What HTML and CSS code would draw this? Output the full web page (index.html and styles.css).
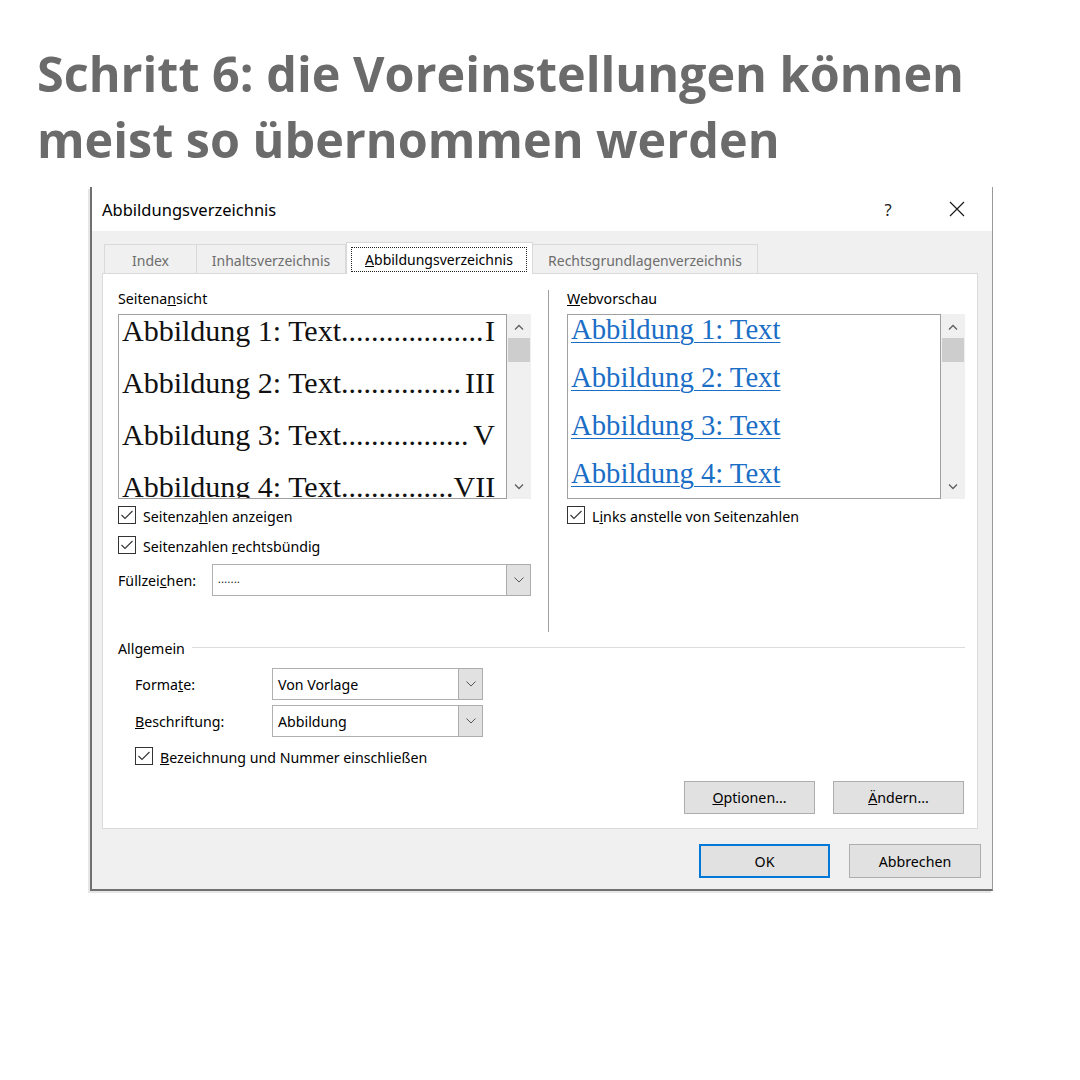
FILE: index.html
```html
<!DOCTYPE html>
<html lang="de">
<head>
<meta charset="utf-8">
<title>Abbildungsverzeichnis</title>
<link rel="stylesheet" href="styles.css">
</head>
<body>
<h1 class="heading">Schritt 6: die Voreinstellungen können<br>meist so übernommen werden</h1>

<div class="dialog">
  <div class="titlebar">
    <span class="title">Abbildungsverzeichnis</span>
    <span class="help">?</span>
    <span class="close"><svg width="16" height="16" viewBox="0 0 16 16"><path d="M1 1L15 15M15 1L1 15" stroke="#1a1a1a" stroke-width="1.2" fill="none"/></svg></span>
  </div>

  <div class="body">
    <div class="tabs">
      <div class="tab tab-index">Index</div>
      <div class="tab tab-inhalt">Inhaltsverzeichnis</div>
      <div class="tab tab-abb active"><span class="focus"><u>A</u>bbildungsverzeichnis</span></div>
      <div class="tab tab-recht">Rechtsgrundlagenverzeichnis</div>
    </div>

    <div class="panel">
      <div class="top">
        <div class="col col-left">
          <div class="label">Seitena<u>n</u>sicht</div>
          <div class="preview">
            <div class="pbox pbox-left">
              <div class="entries">
                <div class="entry"><span class="etext">Abbildung 1: Text...................</span><span class="pg">I</span></div>
                <div class="entry"><span class="etext">Abbildung 2: Text................</span><span class="pg">III</span></div>
                <div class="entry"><span class="etext">Abbildung 3: Text.................</span><span class="pg">V</span></div>
                <div class="entry"><span class="etext">Abbildung 4: Text...............</span><span class="pg">VII</span></div>
              </div>
            </div>
            <div class="scroll">
              <svg class="arrow" width="10" height="6" viewBox="0 0 10 6"><path d="M1 5.5L5 1.5L9 5.5" stroke="#606060" stroke-width="1.3" fill="none"/></svg>
              <div class="thumb"></div>
              <div class="spacer"></div>
              <svg class="arrow" width="10" height="6" viewBox="0 0 10 6"><path d="M1 0.5L5 4.5L9 0.5" stroke="#606060" stroke-width="1.3" fill="none"/></svg>
            </div>
          </div>
          <div class="check first">
            <svg class="cb" width="18" height="18" viewBox="0 0 18 18"><rect x="0.5" y="0.5" width="17" height="17" fill="#fff" stroke="#333"/><path d="M3.5 9L7 12.5L14.5 5" stroke="#333" stroke-width="1.1" fill="none"/></svg>
            <span>Seitenza<u>h</u>len anzeigen</span>
          </div>
          <div class="check">
            <svg class="cb" width="18" height="18" viewBox="0 0 18 18"><rect x="0.5" y="0.5" width="17" height="17" fill="#fff" stroke="#333"/><path d="M3.5 9L7 12.5L14.5 5" stroke="#333" stroke-width="1.1" fill="none"/></svg>
            <span>Seitenzahlen <u>r</u>echtsbündig</span>
          </div>
          <div class="field fill-row">
            <span class="flabel fill-label">Füllzei<u>c</u>hen:</span>
            <div class="combo fill-combo">
              <span class="cval dots">.......</span>
              <span class="cbtn"><svg width="10" height="6" viewBox="0 0 10 6"><path d="M0.5 0.5L5 5L9.5 0.5" stroke="#555" stroke-width="1" fill="none"/></svg></span>
            </div>
          </div>
        </div>

        <div class="sep"></div>

        <div class="col col-right">
          <div class="label"><u>W</u>ebvorschau</div>
          <div class="preview">
            <div class="pbox pbox-right">
              <div class="links">
                <a class="link">Abbildung 1: Text</a>
                <a class="link">Abbildung 2: Text</a>
                <a class="link">Abbildung 3: Text</a>
                <a class="link">Abbildung 4: Text</a>
              </div>
            </div>
            <div class="scroll">
              <svg class="arrow" width="10" height="6" viewBox="0 0 10 6"><path d="M1 5.5L5 1.5L9 5.5" stroke="#606060" stroke-width="1.3" fill="none"/></svg>
              <div class="thumb"></div>
              <div class="spacer"></div>
              <svg class="arrow" width="10" height="6" viewBox="0 0 10 6"><path d="M1 0.5L5 4.5L9 0.5" stroke="#606060" stroke-width="1.3" fill="none"/></svg>
            </div>
          </div>
          <div class="check first">
            <svg class="cb" width="18" height="18" viewBox="0 0 18 18"><rect x="0.5" y="0.5" width="17" height="17" fill="#fff" stroke="#333"/><path d="M3.5 9L7 12.5L14.5 5" stroke="#333" stroke-width="1.1" fill="none"/></svg>
            <span>L<u>i</u>nks anstelle von Seitenzahlen</span>
          </div>
        </div>
      </div>

      <div class="group">
        <div class="ghead"><span>Allgemein</span><span class="gline"></span></div>
        <div class="gbody">
          <div class="field first-field">
            <span class="flabel">Forma<u>t</u>e:</span>
            <div class="combo gcombo">
              <span class="cval">Von Vorlage</span>
              <span class="cbtn"><svg width="10" height="6" viewBox="0 0 10 6"><path d="M0.5 0.5L5 5L9.5 0.5" stroke="#555" stroke-width="1" fill="none"/></svg></span>
            </div>
          </div>
          <div class="field second-field">
            <span class="flabel"><u>B</u>eschriftung:</span>
            <div class="combo gcombo">
              <span class="cval">Abbildung</span>
              <span class="cbtn"><svg width="10" height="6" viewBox="0 0 10 6"><path d="M0.5 0.5L5 5L9.5 0.5" stroke="#555" stroke-width="1" fill="none"/></svg></span>
            </div>
          </div>
          <div class="check gcheck">
            <svg class="cb" width="18" height="18" viewBox="0 0 18 18"><rect x="0.5" y="0.5" width="17" height="17" fill="#fff" stroke="#333"/><path d="M3.5 9L7 12.5L14.5 5" stroke="#333" stroke-width="1.1" fill="none"/></svg>
            <span><u>B</u>ezeichnung und Nummer einschließen</span>
          </div>
        </div>
      </div>

      <div class="actions">
        <button class="btn"><u>O</u>ptionen...</button>
        <button class="btn"><u>Ä</u>ndern...</button>
      </div>
    </div>

    <div class="footer">
      <button class="btn btn-ok">OK</button>
      <button class="btn">Abbrechen</button>
    </div>
  </div>
</div>
</body>
</html>
```

FILE: styles.css
```css
* { box-sizing: border-box; }

html, body {
  margin: 0;
  padding: 0;
  background: #ffffff;
}

body {
  width: 1080px;
  height: 1080px;
  overflow: hidden;
  font-family: "Noto Sans", "Open Sans", sans-serif;
}

.heading {
  margin: 0;
  padding: 40px 0 0 37px;
  font-family: "Open Sans", sans-serif;
  font-weight: 700;
  font-size: 48.5px;
  line-height: 66px;
  color: #6b6b6b;
  letter-spacing: 0;
}

.dialog {
  margin: 15px 0 0 90px;
  width: 903px;
  height: 704px;
  border-left: 2px solid #707070;
  border-right: 1px solid #9a9a9a;
  border-bottom: 2px solid #707070;
  box-shadow: -2px 2px 0 #e6e6e6;
  display: flex;
  flex-direction: column;
  font-size: 14.2px;
  color: #000;
}

.titlebar {
  height: 44px;
  background: #fff;
  display: flex;
  align-items: center;
  padding-left: 10px;
}

.title {
  font-size: 16.5px;
  flex: 1;
  color: #000;
}

.help {
  font-size: 16.5px;
  width: 14px;
  text-align: center;
  margin-right: 54px;
  color: #1a1a1a;
}

.close {
  display: flex;
  width: 16px;
  height: 16px;
  margin-right: 27px;
}

.body {
  flex: 1;
  background: #f0f0f0;
  padding-top: 11px;
  display: flex;
  flex-direction: column;
}

.tabs {
  display: flex;
  align-items: flex-end;
  height: 31px;
  padding-left: 12px;
  font-size: 14px;
}

.tab {
  height: 29px;
  border: 1px solid #d9d9d9;
  border-bottom: none;
  background: #f0f0f0;
  color: #6d6d6d;
  display: flex;
  align-items: center;
  justify-content: center;
  padding-top: 3px;
  white-space: nowrap;
}

.tab + .tab { border-left: none; }

.tab-index { width: 93px; }
.tab-inhalt { width: 149px; }
.tab-abb { width: 187px; }
.tab-recht { width: 225px; }

.tab.active {
  height: 32px;
  margin-bottom: -1px;
  background: #fff;
  color: #000;
  position: relative;
  z-index: 1;
  border-left: 1px solid #d9d9d9;
  padding: 4px 5px 2px 4px;
  align-items: stretch;
}

.tab.active + .tab { border-left: none; }

.focus {
  flex: 1;
  border: 1px dotted #222;
  display: flex;
  align-items: center;
  justify-content: center;
}

.panel {
  margin-left: 10px;
  width: 876px;
  height: 556px;
  background: #fff;
  border: 1px solid #dadada;
  padding: 0 12px 0 15px;
  display: flex;
  flex-direction: column;
}

.top {
  display: flex;
  height: 358px;
}

.col { display: flex; flex-direction: column; }
.col-left { width: 413px; }
.col-right { width: 398px; margin-left: 18px; }

.sep {
  width: 1px;
  background: #a0a0a0;
  margin: 16px 0 0 17px;
}

.label {
  margin-top: 17px;
  height: 16px;
  line-height: 16px;
}

.preview {
  margin-top: 7px;
  display: flex;
  height: 185px;
}

.pbox {
  height: 185px;
  border: 1px solid #a0a0a0;
  background: #fff;
  overflow: hidden;
}

.pbox-left { width: 389px; }
.pbox-right { width: 374px; }

.entries {
  margin-top: -10px;
  padding: 0 11px 0 3px;
  font-family: "Liberation Serif", "Times New Roman", serif;
  font-size: 30px;
  line-height: 52px;
  color: #111;
}

.entry {
  display: flex;
  justify-content: space-between;
  white-space: nowrap;
}

.links {
  margin-top: -10px;
  padding-left: 3px;
  display: flex;
  flex-direction: column;
  align-items: flex-start;
  font-family: "Liberation Serif", "Times New Roman", serif;
  font-size: 28.7px;
  line-height: 48px;
}

.link {
  color: #1b6ec6;
  text-decoration: underline;
  text-decoration-thickness: 1px;
  text-underline-offset: 3px;
  white-space: nowrap;
}

.scroll {
  width: 24px;
  height: 185px;
  background: #f0f0f0;
  display: flex;
  flex-direction: column;
  align-items: center;
}

.scroll .arrow { margin-top: 10px; flex: none; }
.scroll .arrow:last-child { margin-top: 0; margin-bottom: 9px; }

.thumb {
  width: 22px;
  height: 24px;
  background: #cdcdcd;
  margin-top: 8px;
}

.spacer { flex: 1; }

.check {
  display: flex;
  align-items: center;
  height: 18px;
  gap: 7px;
  white-space: nowrap;
}

.check span { padding-top: 2px; }

.check.first { margin-top: 7px; }
.check + .check { margin-top: 12px; }

.cb { flex: none; }

.field {
  display: flex;
  align-items: center;
}

.fill-row { margin-top: 10px; }

.flabel { white-space: nowrap; }

.fill-label { width: 94px; }

.combo {
  display: flex;
  height: 32px;
  border: 1px solid #b0b0b0;
  background: #fff;
}

.fill-combo { width: 319px; }

.cval {
  flex: 1;
  display: flex;
  align-items: center;
  padding-left: 5px;
}

.dots {
  font-size: 10px;
  letter-spacing: 0.5px;
  padding-bottom: 2px;
}

.cbtn {
  width: 25px;
  margin: -1px -1px -1px 0;
  background: #e1e1e1;
  border: 1px solid #adadad;
  display: flex;
  align-items: center;
  justify-content: center;
}

.group {
  margin-top: 9px;
}

.ghead {
  display: flex;
  align-items: center;
  height: 16px;
  line-height: 16px;
}

.gline {
  flex: 1;
  height: 1px;
  background: #dcdcdc;
  margin: -3px 0 0 7px;
}

.gbody {
  padding-left: 17px;
}

.first-field { margin-top: 11px; }
.second-field { margin-top: 5px; }

.first-field .flabel,
.second-field .flabel { width: 137px; }

.gcombo { width: 211px; }

.gcheck { margin-top: 10px; }

.actions {
  margin-top: 16px;
  display: flex;
  justify-content: flex-end;
  gap: 18px;
  padding-right: 1px;
}

.btn {
  width: 131px;
  height: 33px;
  background: #e1e1e1;
  border: 1px solid #adadad;
  font-family: "Noto Sans", "Open Sans", sans-serif;
  font-size: 14.2px;
  color: #000;
  padding: 0;
  margin: 0;
}

.footer {
  margin-top: 15px;
  display: flex;
  justify-content: flex-end;
  gap: 19px;
  padding-right: 11px;
}

.footer .btn { height: 34px; }
.footer .btn + .btn { width: 132px; }

.btn-ok {
  border: 2px solid #0078d7;
}
```
